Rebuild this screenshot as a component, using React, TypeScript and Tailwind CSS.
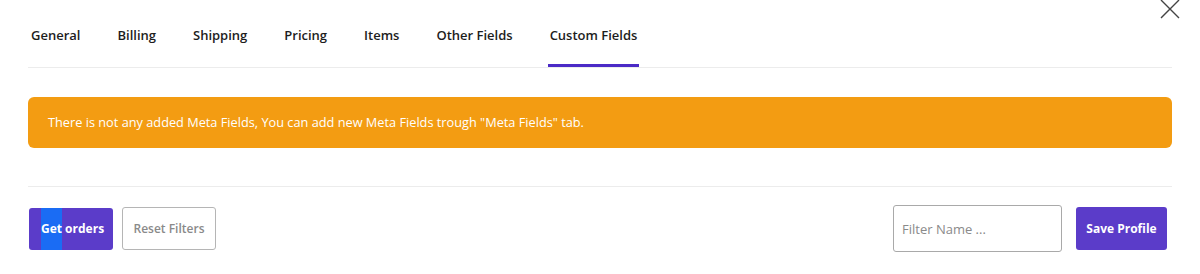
const tabs = ["General", "Billing", "Shipping", "Pricing", "Items", "Other Fields", "Custom Fields"];

export default function App() {
  return (
    <div className="relative h-[274px] w-[1200px] overflow-hidden bg-white font-['Open_Sans',sans-serif]">
      {/* close */}
      <button className="absolute right-[19px] top-[-2px] text-[#444]">
        <svg width="22" height="22" viewBox="0 0 22 22" fill="none" stroke="currentColor" strokeWidth="1.4">
          <path d="M2 2L20 20M20 2L2 20" />
        </svg>
      </button>

      <div className="px-[28px]">
        {/* tabs */}
        <nav className="flex gap-[33px] border-b border-[#ececec] pl-[1px] pt-[26px]">
          {tabs.map((t) => (
            <div
              key={t}
              className={`border-b-[3px] px-[2px] pb-[20px] text-[13px] font-semibold leading-[18px] text-[#1d1d1d] ${
                t === "Custom Fields" ? "border-[#4b2ac6]" : "border-transparent"
              }`}
            >
              {t}
            </div>
          ))}
        </nav>

        {/* notice */}
        <div className="mt-[29px] flex h-[51px] items-center rounded-[6px] bg-[#f39c12] px-[20px] text-[12.75px] text-white">
          There is not any added Meta Fields, You can add new Meta Fields trough "Meta Fields" tab.
        </div>

        <div className="mt-[38px] border-t border-[#ececec]" />

        {/* actions */}
        <div className="mt-[18px] flex items-center justify-between">
          <div className="flex items-center gap-[9px] pl-[1px]">
            <button className="flex h-[42px] w-[84px] items-stretch overflow-hidden rounded-[3px] bg-[#5b3cc9] pl-[12px] text-[12px] font-bold text-white">
              <span className="flex items-center bg-[#1a6cf4]">Get</span>
              <span className="flex items-center">&nbsp;orders</span>
            </button>
            <button className="h-[43px] w-[94px] rounded-[3px] border border-[#b5b5b5] bg-white text-[12px] font-semibold text-[#8a8a8a]">
              Reset Filters
            </button>
          </div>
          <div className="flex items-center gap-[14px] pr-[5px]">
            <input
              placeholder="Filter Name ..."
              className="h-[47px] w-[169px] rounded-[3px] border border-[#a9a9a9] px-[8px] text-[13px] text-[#333] placeholder:text-[#8a8a8a] outline-none"
            />
            <button className="h-[43px] w-[91px] rounded-[3px] bg-[#5b3cc9] text-[12px] font-bold text-white">
              Save Profile
            </button>
          </div>
        </div>
      </div>
    </div>
  );
}
